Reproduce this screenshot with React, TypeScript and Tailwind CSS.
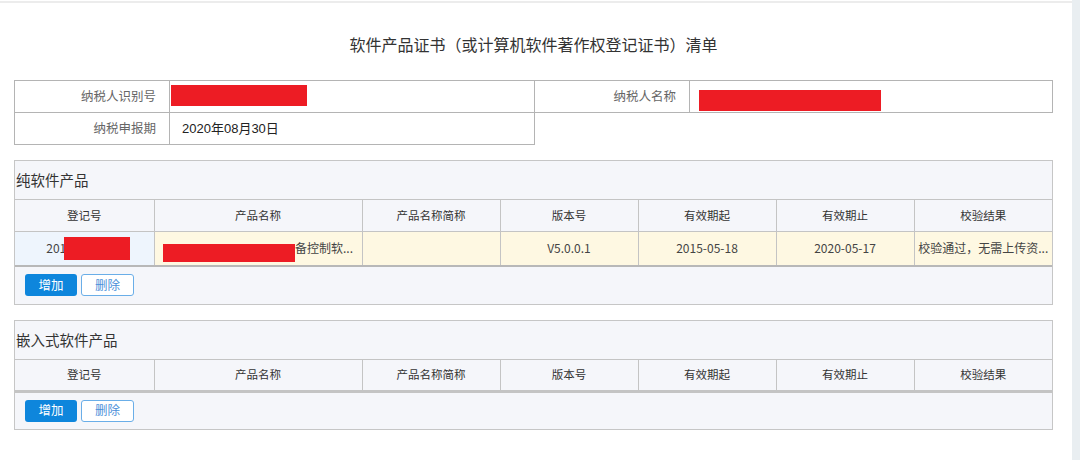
import React from "react";

const font = { fontFamily: '"Noto Sans CJK SC", "Liberation Sans", sans-serif' };

const columns = ["登记号", "产品名称", "产品名称简称", "版本号", "有效期起", "有效期止", "校验结果"];

const ColGroup = () => (
  <colgroup>
    <col className="w-[139px]" />
    <col className="w-[208px]" />
    <col className="w-[138px]" />
    <col className="w-[138px]" />
    <col className="w-[138px]" />
    <col className="w-[138px]" />
    <col />
  </colgroup>
);

const HeaderRow = ({ doubleBottom }: { doubleBottom?: boolean }) => (
  <tr className="h-[32px]">
    {columns.map((c, i) => (
      <th
        key={c}
        className={`border-t border-[#c4c4c4] font-normal text-[11.5px] text-[#333] text-center ${
          i < columns.length - 1 ? "border-r" : ""
        } ${doubleBottom ? "border-b-[3px] border-b-double" : "border-b"}`}
      >
        {c}
      </th>
    ))}
  </tr>
);

const Buttons = ({ h }: { h: string }) => (
  <div className={`${h} flex items-center pl-[10px] gap-[4px]`}>
    <button className="w-[52px] h-[22px] rounded-[3px] bg-[#0e86dc] text-white text-[12.5px] leading-none">
      增加
    </button>
    <button className="w-[53px] h-[22px] rounded-[3px] bg-white border border-[#6aaee8] text-[#4a8fd9] text-[12.5px] leading-none">
      删除
    </button>
  </div>
);

const Panel = ({ title, children }: { title: string; children: React.ReactNode }) => (
  <div className="border border-[#c6c6c6] bg-[#f5f6fa]">
    <div className="h-[38px] flex items-center pl-px text-[14.5px] text-[#333]">{title}</div>
    {children}
  </div>
);

const Red = ({ className }: { className: string }) => <div className={`bg-[#ed1c24] shrink-0 ${className}`} />;

export default function App() {
  return (
    <div className="flex w-[1080px] h-[460px] bg-white overflow-hidden" style={font}>
      <div className="flex-1 pt-px">
        <div className="border-t-2 border-[#ececec] pl-[14px] pr-[19px]">
          <h1 className="pt-[30px] pb-[25px] text-center text-[16px] leading-[22px] font-normal text-[#333]">
            软件产品证书（或计算机软件著作权登记证书）清单
          </h1>

          <div className="grid grid-cols-[156px_365px_155px_363px] text-[12.5px]">
            <div className="h-[33px] border border-[#b4b4b4] flex items-center justify-end pr-[13px] text-[#666]">
              纳税人识别号
            </div>
            <div className="h-[33px] border-y border-r border-[#b4b4b4] flex items-center pl-px">
              <Red className="w-[136px] h-[21px] -mt-[3px]" />
            </div>
            <div className="h-[33px] border-y border-r border-[#b4b4b4] flex items-center justify-end pr-[13px] text-[#666]">
              纳税人名称
            </div>
            <div className="h-[33px] border-y border-r border-[#b4b4b4] flex items-center pl-[9px]">
              <Red className="w-[182px] h-[21px] mt-[7px]" />
            </div>
            <div className="h-[32px] border-x border-b border-[#b4b4b4] flex items-center justify-end pr-[13px] text-[#666]">
              纳税申报期
            </div>
            <div
              className="h-[32px] border-r border-b border-[#b4b4b4] flex items-center pl-[12px] text-[13px] text-[#222]"
              style={{ fontFamily: '"Liberation Sans", "Noto Sans CJK SC", sans-serif' }}
            >
              2020年08月30日
            </div>
          </div>

          <div className="mt-[15px]">
            <Panel title="纯软件产品">
              <table className="w-full table-fixed border-collapse">
                <ColGroup />
                <thead>
                  <HeaderRow />
                </thead>
                <tbody>
                  <tr className="h-[34px] text-[12px] text-[#444] border-b-2 border-[#b8b8b8]">
                    <td className="border-r border-[#c4c4c4] bg-[#eef5fd]">
                      <div className="flex items-center justify-center pl-[8px]">
                        <span>201</span>
                        <Red className="w-[66px] h-[23px] -ml-[2px]" />
                      </div>
                    </td>
                    <td className="border-r border-[#c4c4c4] bg-[#fef8e2]">
                      <div className="flex items-center justify-center">
                        <Red className="w-[132px] h-[18px] mt-[10px]" />
                        <span className="whitespace-nowrap">备控制软...</span>
                      </div>
                    </td>
                    <td className="border-r border-[#c4c4c4] bg-[#fef8e2]" />
                    <td className="border-r border-[#c4c4c4] bg-[#fef8e2] text-center">V5.0.0.1</td>
                    <td className="border-r border-[#c4c4c4] bg-[#fef8e2] text-center">2015-05-18</td>
                    <td className="border-r border-[#c4c4c4] bg-[#fef8e2] text-center">2020-05-17</td>
                    <td className="bg-[#fef8e2] text-center whitespace-nowrap">校验通过，无需上传资...</td>
                  </tr>
                </tbody>
              </table>
              <Buttons h="h-[37px]" />
            </Panel>
          </div>

          <div className="mt-[15px]">
            <Panel title="嵌入式软件产品">
              <table className="w-full table-fixed border-collapse">
                <ColGroup />
                <thead>
                  <HeaderRow doubleBottom />
                </thead>
              </table>
              <Buttons h="h-[36px]" />
            </Panel>
          </div>
        </div>
      </div>
      <div className="w-[8px] h-full bg-[#e9eef1]" />
    </div>
  );
}
